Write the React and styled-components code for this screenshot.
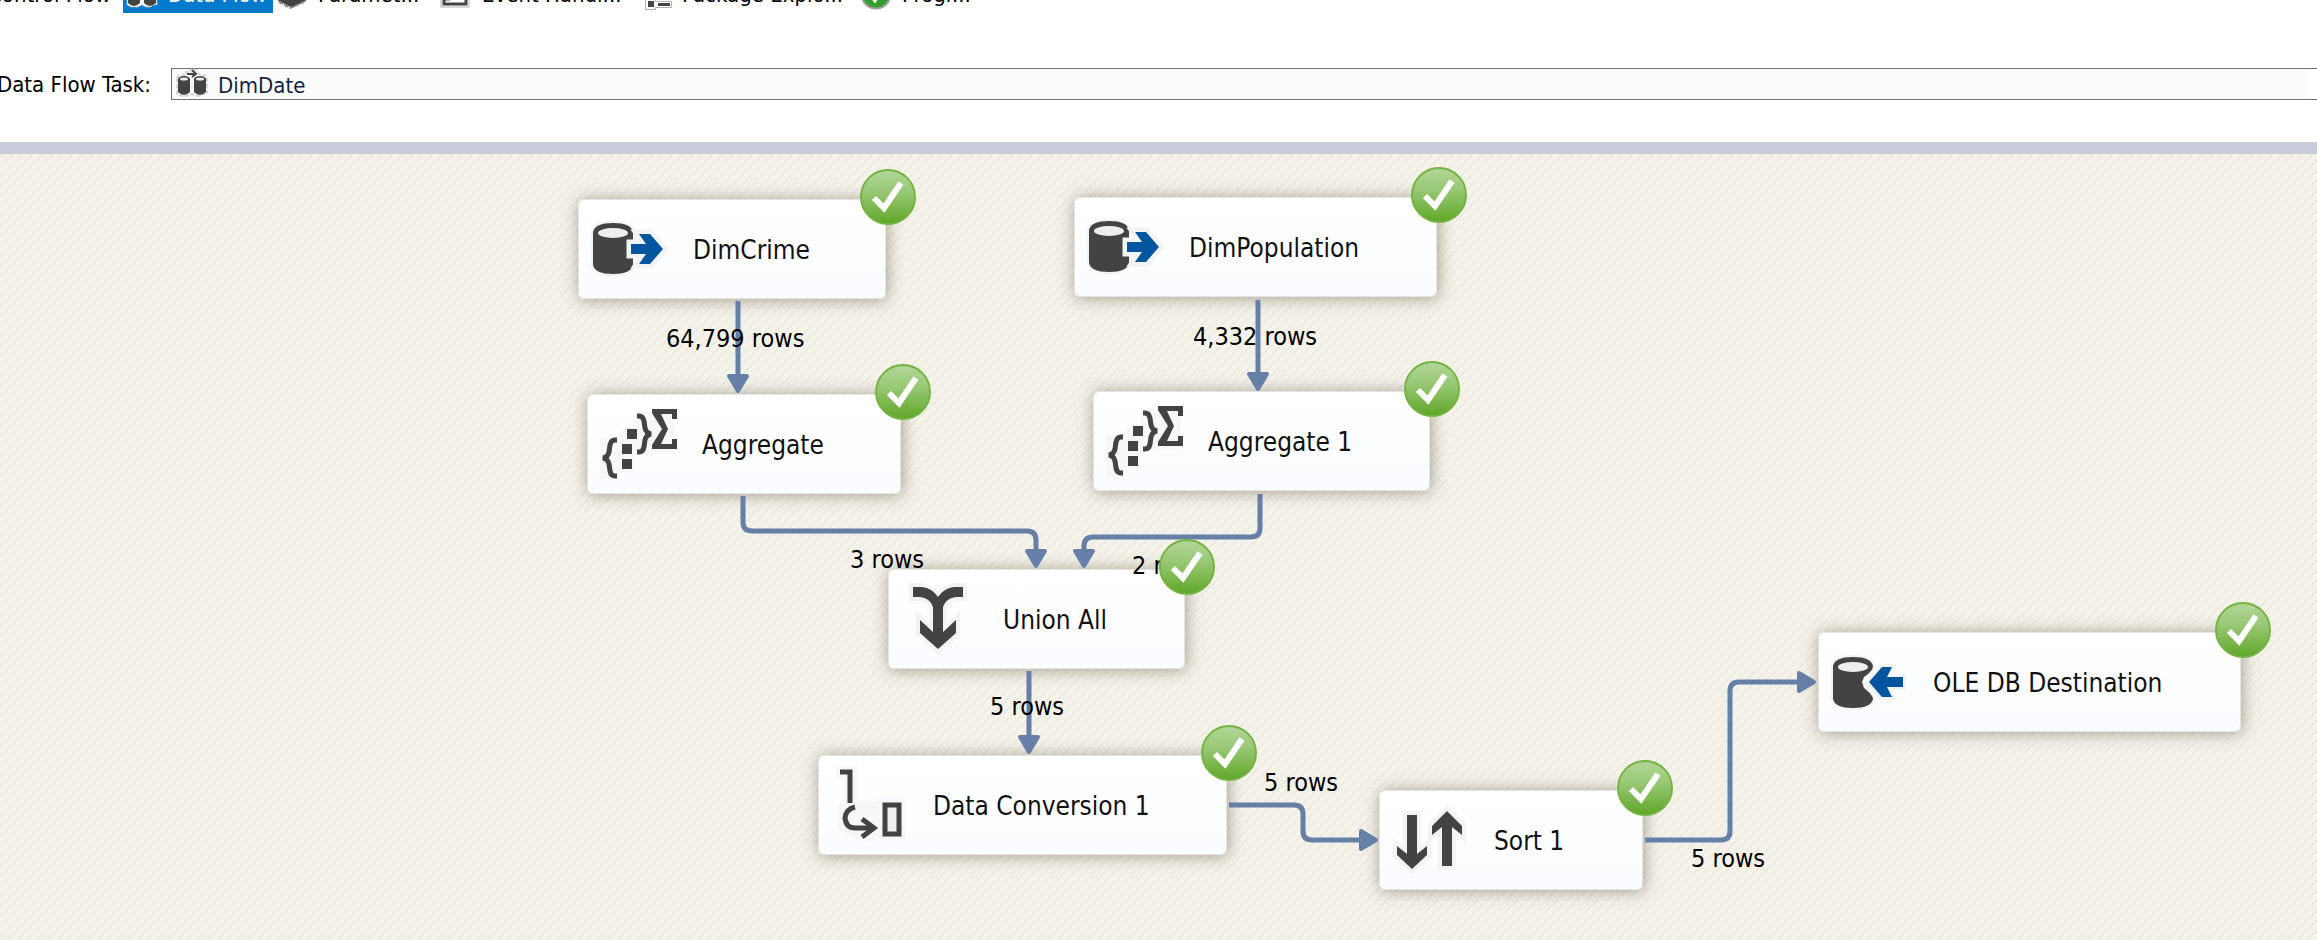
import React from "react";
import styled, { createGlobalStyle } from "styled-components";

const GlobalStyle = createGlobalStyle`
  * { box-sizing: border-box; }
  body {
    margin: 0;
    background: #ffffff;
    color: #000000;
    font-family: "DejaVu Sans Condensed", "DejaVu Sans", Roboto, sans-serif;
    font-size: 22px;
  }
`;

const Designer = styled.div`
  display: flex;
  flex-direction: column;
  min-height: 100vh;
  overflow: hidden;
`;

const TabStrip = styled.nav`
  display: flex;
  align-items: flex-end;
  height: 13px;
  overflow: hidden;
`;

const Tab = styled.button`
  display: flex;
  flex: none;
  align-items: center;
  gap: 10px;
  width: ${(p) => p.$width}px;
  height: 36px;
  padding: 0 3px;
  border: 0;
  background: ${(p) => (p.$active ? "#007acc" : "transparent")};
  color: ${(p) => (p.$active ? "#ffffff" : "#000000")};
  font: inherit;
  line-height: 36px;
  white-space: nowrap;
  justify-content: ${(p) => (p.$end ? "flex-end" : "flex-start")};
  padding-right: ${(p) => (p.$end ? 12 : 3)}px;
`;

const TaskBar = styled.div`
  display: flex;
  align-items: center;
  gap: 20px;
  margin: 55px 0 42px;
`;

const TaskLabel = styled.label`
  display: flex;
  flex: none;
  justify-content: flex-end;
  width: 151px;
  white-space: nowrap;
`;

const TaskPicker = styled.div`
  display: flex;
  flex: 1;
  align-items: center;
  gap: 10px;
  height: 32px;
  padding-left: 4px;
  border: 1px solid #707070;
  border-right: 0;
  background: linear-gradient(#fcfcfc, #fcfcfc) no-repeat;
  background-size: calc(100% - 10px) 100%;
`;

const TaskSelect = styled.select`
  flex: 1;
  height: 30px;
  padding: 2px 0 0;
  border: 0;
  appearance: none;
  background: transparent;
  color: #14233f;
  font: inherit;
`;

const Divider = styled.div`
  height: 12px;
  background: #c8ccda;
`;

const Canvas = styled.main`
  position: relative;
  flex: 1;
  min-height: 786px;
  overflow: hidden;
  background-color: #f5f2ea;
  background-image: linear-gradient(
    135deg,
    transparent 11%,
    #e2e0d8 13%,
    #e2e0d8 16%,
    transparent 18%,
    transparent 61%,
    #e2e0d8 63%,
    #e2e0d8 66%,
    transparent 68%
  );
  background-size: 10px 10px;
`;

const Node = styled.div`
  position: absolute;
  left: ${(p) => p.$x}px;
  top: ${(p) => p.$y}px;
  display: flex;
  align-items: center;
  gap: 25px;
  width: ${(p) => p.$width}px;
  height: 100px;
  padding: 0 9px;
  border: 1px solid #e6e5e1;
  border-radius: 6px;
  background: linear-gradient(#ffffff, #fbfcff);
  background-clip: padding-box;
  box-shadow: 1px 1px 16px rgba(80, 74, 48, 0.5);
  white-space: nowrap;
`;

const NodeName = styled.span`
  padding-top: 2px;
  color: #111111;
  font-size: 26px;
`;

const NodeIcon = styled.svg`
  flex: none;
  width: 80px;
  height: 80px;
`;

const Badge = styled.svg`
  position: absolute;
  z-index: 3;
  top: -31px;
  right: -31px;
  width: 56px;
  height: 56px;
`;

const Wires = styled.svg`
  position: absolute;
  z-index: 1;
  inset: 0;
  width: 100%;
  height: 100%;
  pointer-events: none;
`;

const RowCount = styled.span`
  position: absolute;
  z-index: 2;
  left: ${(p) => p.$x}px;
  top: ${(p) => p.$y}px;
  font-size: 25px;
  line-height: 30px;
  white-space: nowrap;
`;

const TabIcon = styled.svg`
  flex: none;
  width: 32px;
  height: 32px;
`;

const INK = "#434343";
const BLUE = "#00559f";
const HALO = "#f3f3f4";
const WIRE = "#667fa7";

const FlowGlyph = () => (
  <TabIcon viewBox="0 0 32 32" aria-hidden="true">
    <path
      d="M1 10Q1 7 5 7H9V4H14V1H19L24 7H28Q31 7 31 10V26H27L25 28H20L16 26L12 28H5L1 26Z"
      fill="#f4f4f4"
      stroke="#b4b4b4"
      strokeDasharray="4 2"
    />
    <path d="M2 11V24Q8 30 14 24V11Z M18 11V24Q24 30 30 24V11Z" fill={INK} />
    <ellipse cx="8" cy="11" rx="6" ry="3" fill={INK} />
    <ellipse cx="24" cy="11" rx="6" ry="3" fill={INK} />
    <ellipse cx="8" cy="11" rx="4" ry="1.5" fill="#eeeeee" />
    <ellipse cx="24" cy="11" rx="4" ry="1.5" fill="#eeeeee" />
    <path d="M11 6H20M16 2L20 6L16 9" fill="none" stroke={INK} strokeWidth="2" />
  </TabIcon>
);

const BoxGlyph = () => (
  <TabIcon viewBox="0 0 32 32" aria-hidden="true">
    <path d="M2 10L16 3L30 10V22L16 29L2 22Z" fill={INK} stroke="#bdbdbd" />
    <path d="M3 23L14 29L30 22" fill="none" stroke="#8a8a8a" strokeWidth="2" strokeDasharray="4 2" />
  </TabIcon>
);

const EventGlyph = () => (
  <TabIcon viewBox="0 0 32 32" aria-hidden="true">
    <rect x="1" y="4" width="28" height="24" fill="#ffffff" stroke="#b0b0b0" />
    <path d="M4 7V25H26V7M4 20H10" fill="none" stroke={INK} strokeWidth="3" />
    <path d="M10 20H22" stroke={INK} strokeWidth="2" />
  </TabIcon>
);

const ExplorerGlyph = () => (
  <TabIcon viewBox="0 0 32 32" aria-hidden="true">
    <path d="M5.500 20.500H15.500V22.500H31.500V28.500H15.500V30.500H5.500Z" fill="#ffffff" stroke="#b0b0b0" />
    <rect x="8" y="22" width="6" height="6" fill={INK} />
    <rect x="18" y="24" width="12" height="3" fill={INK} />
    <rect x="1" y="2" width="12" height="12" fill={INK} />
  </TabIcon>
);

const ProgressGlyph = () => (
  <TabIcon viewBox="0 0 32 32" aria-hidden="true">
    <circle cx="16" cy="15" r="14.500" fill="#339f2f" stroke="#a0a0a0" strokeWidth="2" />
    <path d="M9 15L15 22L23 9" fill="none" stroke="#ffffff" strokeWidth="3" />
  </TabIcon>
);

const glyphs = {
  source: (
    <>
      <path
        d="M5 23V56Q7 65 25 65Q43 65 45 56V23Q43 14 25 14Q7 14 5 23Z"
        fill={INK}
        stroke={HALO}
        strokeWidth="4"
        paintOrder="stroke"
      />
      <ellipse cx="25" cy="24" rx="15" ry="5" fill="#eeeef1" />
      <path
        d="M43 35H58L51 25H62L75 40L62 55H51L58 45H43Z"
        fill={BLUE}
        stroke={HALO}
        strokeWidth="9"
        paintOrder="stroke"
      />
    </>
  ),
  destination: (
    <>
      <path
        d="M5 24V57Q7 66 25 66Q43 66 45 57Q45 53 36 46L34 40L36 35Q45 29 45 24Q43 15 25 15Q7 15 5 24Z"
        fill={INK}
        stroke={HALO}
        strokeWidth="4"
        paintOrder="stroke"
      />
      <ellipse cx="25" cy="25" rx="15" ry="5" fill="#eeeef1" />
      <path
        d="M75 35H59L64 25H54L41 40L54 55H64L59 45H75Z"
        fill={BLUE}
        stroke={HALO}
        strokeWidth="6"
        paintOrder="stroke"
      />
    </>
  ),
  aggregate: (
    <>
      <path
        d="M28 23H38V8H78V48H54L37 52V68H22V76H3V34L20 32Z"
        fill="#f7f7f8"
      />
      <g fill="none" stroke={INK} strokeWidth="5">
        <path d="M20 36H18Q14 36 13 41L12 48Q11 53 6 54Q11 55 12 60L13 67Q14 72 18 72H20" />
        <path d="M40 12H42Q46 12 47 17L48 24Q49 29 54 30Q49 31 48 36L47 43Q46 48 42 48H40" />
      </g>
      <path d="M30 25H40V35H30ZM25 40H35V50H25ZM25 55H35V65H25Z" fill={INK} />
      <path d="M55 5H80V15H75V10H64L71 25L64 40H75V35H80V45H55V41L65 25L55 9Z" fill={INK} />
    </>
  ),
  union: (
    <path
      d="M15 8H24Q34 9 40 18Q46 9 56 8H65V18H58Q48 19 45 28V53L58 41V54L40 70L22 54V41L35 53V28Q32 19 22 18H15Z"
      fill={INK}
      stroke={HALO}
      strokeWidth="8"
      paintOrder="stroke"
    />
  ),
  convert: (
    <>
      <path d="M8 1H29V36H50V33H77V75H50L34 77L10 65V42L17 35V13H8Z" fill="#f7f7f8" />
      <g fill="none" stroke={INK} strokeWidth="5">
        <path d="M12 7H22V38" />
        <path d="M27 42Q18 44 17 53Q18 63 27 63H46" />
        <path d="M34 54L46 63L34 72" />
        <rect x="57" y="40" width="14" height="29" fill="#eeeef0" />
      </g>
    </>
  ),
  sort: (
    <path
      d="M18 15H28V54L38 46V55L23 69L8 55V46L18 54ZM53 66V27L43 35V26L58 11L73 26V35L63 27V66Z"
      fill={INK}
      stroke={HALO}
      strokeWidth="8"
      paintOrder="stroke"
    />
  ),
};

const SuccessBadge = () => (
  <Badge viewBox="0 0 56 56" role="img" aria-label="Succeeded">
    <defs>
      <linearGradient id="success" x1="0" y1="0" x2="0" y2="1">
        <stop offset="0" stopColor="#b3d698" />
        <stop offset="0.4" stopColor="#99c876" />
        <stop offset="1" stopColor="#5fa727" />
      </linearGradient>
    </defs>
    <circle cx="28" cy="28" r="27" fill="url(#success)" stroke="#74b443" strokeWidth="2" />
    <path d="M14 29L24 39L41 14" fill="none" stroke="#ffffff" strokeWidth="6" />
  </Badge>
);

const tabs = [
  { name: "Control Flow", width: 123, end: true },
  { name: "Data Flow", width: 150, icon: FlowGlyph, active: true },
  { name: "Paramet...", width: 164, icon: BoxGlyph },
  { name: "Event Handl...", width: 200, icon: EventGlyph },
  { name: "Package Explo...", width: 220, icon: ExplorerGlyph },
  { name: "Progr...", width: 140, icon: ProgressGlyph },
];

const nodes = [
  { name: "DimCrime", icon: "source", x: 578, y: 45, width: 308 },
  { name: "DimPopulation", icon: "source", x: 1074, y: 43, width: 363 },
  { name: "Aggregate", icon: "aggregate", x: 587, y: 240, width: 314 },
  { name: "Aggregate 1", icon: "aggregate", x: 1093, y: 237, width: 337 },
  { name: "Union All", icon: "union", x: 888, y: 415, width: 297 },
  { name: "Data Conversion 1", icon: "convert", x: 818, y: 601, width: 409 },
  { name: "Sort 1", icon: "sort", x: 1379, y: 636, width: 264 },
  { name: "OLE DB Destination", icon: "destination", x: 1818, y: 478, width: 423 },
];

const wires = [
  "M738 147V222",
  "M1258 146V220",
  "M743 342V368Q743 377 752 377H1027Q1036 377 1036 386V397",
  "M1260 340V374Q1260 383 1251 383H1093Q1084 383 1084 392V397",
  "M1029 517V583",
  "M1229 651H1294Q1303 651 1303 660V677Q1303 686 1312 686H1361",
  "M1645 686H1721Q1730 686 1730 677V537Q1730 528 1739 528H1799",
];

const heads = [
  { x: 738, y: 240 },
  { x: 1258, y: 238 },
  { x: 1036, y: 415 },
  { x: 1084, y: 415 },
  { x: 1029, y: 601 },
  { x: 1379, y: 686, turn: -90 },
  { x: 1817, y: 528, turn: -90 },
];

const counts = [
  { text: "64,799 rows", x: 666, y: 170 },
  { text: "4,332 rows", x: 1193, y: 168 },
  { text: "3 rows", x: 850, y: 391 },
  { text: "2 rows", x: 1132, y: 397 },
  { text: "5 rows", x: 990, y: 538 },
  { text: "5 rows", x: 1264, y: 614 },
  { text: "5 rows", x: 1691, y: 690 },
];

export default function App() {
  return (
    <>
      <GlobalStyle />
      <Designer>
        <TabStrip>
          {tabs.map(({ name, width, icon: Icon, active, end }) => (
            <Tab key={name} type="button" $width={width} $active={active} $end={end}>
              {Icon && <Icon />}
              {name}
            </Tab>
          ))}
        </TabStrip>
        <TaskBar>
          <TaskLabel htmlFor="task">Data Flow Task:</TaskLabel>
          <TaskPicker>
            <FlowGlyph />
            <TaskSelect id="task" defaultValue="DimDate">
              <option>DimDate</option>
            </TaskSelect>
          </TaskPicker>
        </TaskBar>
        <Divider />
        <Canvas>
          {nodes.map((n) => (
            <Node key={n.name} $x={n.x} $y={n.y} $width={n.width}>
              <NodeIcon viewBox="0 0 80 80" aria-hidden="true">
                {glyphs[n.icon]}
              </NodeIcon>
              <NodeName>{n.name}</NodeName>
              <SuccessBadge />
            </Node>
          ))}
          <Wires aria-hidden="true">
            {wires.map((d) => (
              <path key={d} d={d} fill="none" stroke={WIRE} strokeWidth="5" />
            ))}
            {heads.map(({ x, y, turn = 0 }) => (
              <path
                key={`${x}-${y}`}
                d="M-9 -18H9L0 -3Z"
                transform={`translate(${x} ${y}) rotate(${turn})`}
                fill={WIRE}
                stroke={WIRE}
                strokeWidth="4"
                strokeLinejoin="round"
              />
            ))}
          </Wires>
          {counts.map((c) => (
            <RowCount key={`${c.x}-${c.y}`} $x={c.x} $y={c.y}>
              {c.text}
            </RowCount>
          ))}
        </Canvas>
      </Designer>
    </>
  );
}
